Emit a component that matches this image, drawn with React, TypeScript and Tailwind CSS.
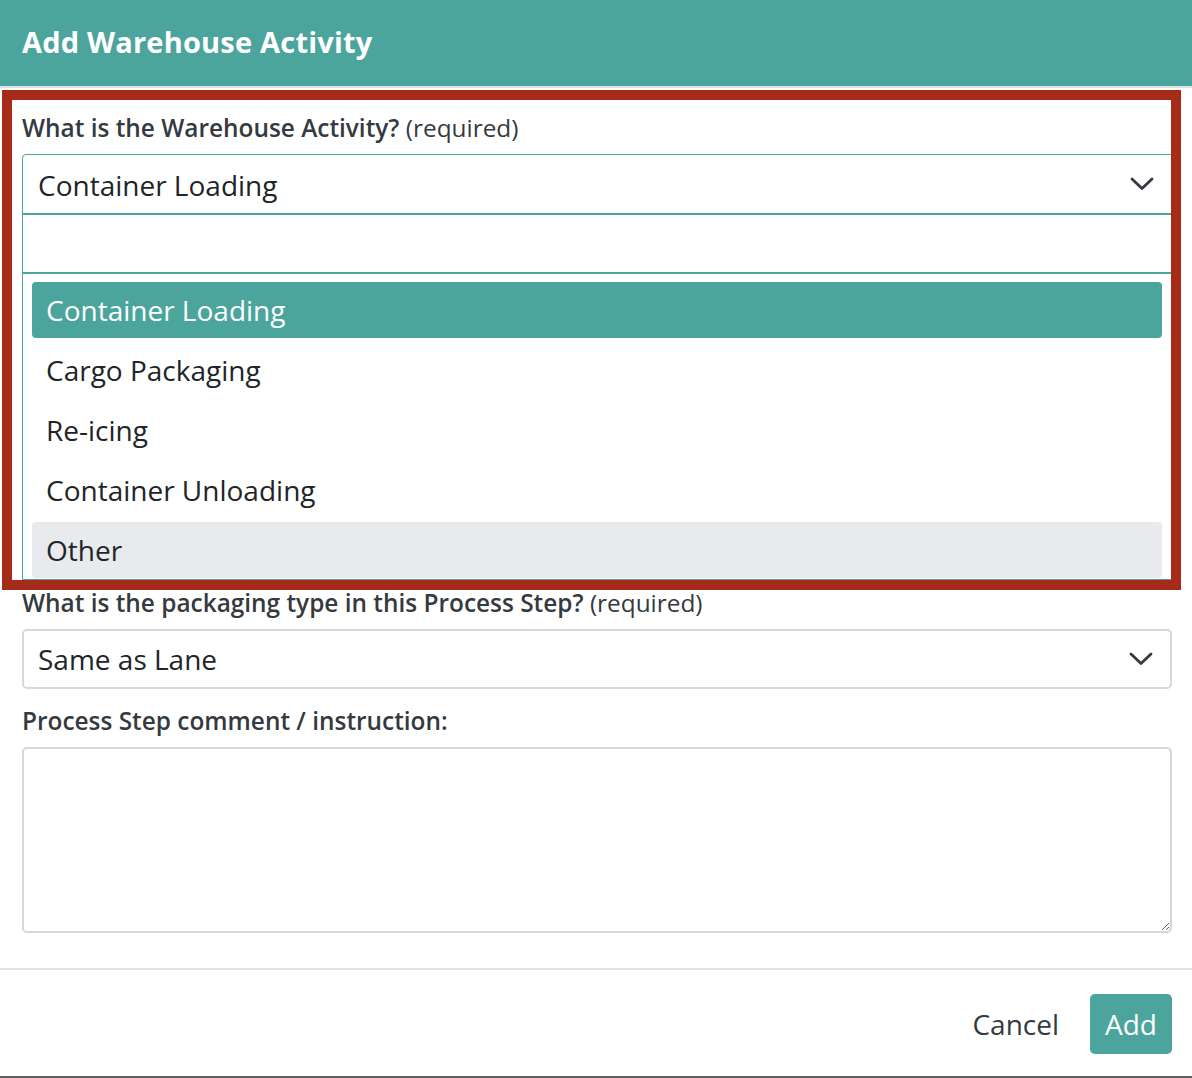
import { useState } from "react";

const ACTIVITIES = ["Container Loading", "Cargo Packaging", "Re-icing", "Container Unloading", "Other"];

// ── Chevron used by both selects ────────────────────────────────────────────
function Chevron() {
  return (
    <svg width="26" height="16" viewBox="0 0 26 16" fill="none">
      <polyline points="3,3 13,12.5 23,3" stroke="#343a40" strokeWidth="2.8" strokeLinecap="round" strokeLinejoin="round" />
    </svg>
  );
}

function Label({ text, required }: { text: string; required?: boolean }) {
  return (
    <div className="text-[24.4px] leading-[28px] text-[#343a40]">
      <span className="font-semibold">{text}</span>
      {required && <span className="font-normal"> (required)</span>}
    </div>
  );
}

export default function App() {
  const [selected] = useState("Container Loading");
  const [hovered, setHovered] = useState("Other");

  return (
    <div
      className="relative w-[1192px] h-[1078px] overflow-hidden bg-white"
      style={{ fontFamily: '"Open Sans", "Noto Sans", sans-serif' }}
    >
      {/* ── Header ───────────────────────────────────────────────────────── */}
      <div className="h-[88px] bg-[#4ba59c] border-b-2 border-[#dfe3e6] pl-[22px] flex items-center">
        <h1 className="text-[29px] font-bold text-white tracking-[0.2px] -mt-[3px]">
          Add Warehouse Activity
        </h1>
      </div>

      {/* ── Body ─────────────────────────────────────────────────────────── */}
      <div className="pl-[22px] pr-[20px] pt-[26px] h-[882px] border-b-2 border-[#dee2e6]">
        <Label text="What is the Warehouse Activity?" required />

        {/* Activity select, opened */}
        <div className="mt-[12px] h-[426px] border border-[#4ba59c] rounded-tl-[4px] overflow-hidden">
          <div className="h-[60px] flex items-center justify-between pl-[15px] pr-[16px] border-b-2 border-[#4ba59c]">
            <span className="text-[28px] text-[#212529] mt-[2px]">{selected}</span>
            <Chevron />
          </div>
          <div className="h-[59px] border-b-2 border-[#4ba59c]" />
          <ul className="px-[9px] pt-[8px] flex flex-col gap-[4px]">
            {ACTIVITIES.map((a) => {
              const active = a === selected;
              const hover = !active && a === hovered;
              return (
                <li
                  key={a}
                  onMouseEnter={() => setHovered(a)}
                  className={
                    "h-[56px] flex items-center pl-[14px] rounded-[4px] text-[28px] " +
                    (active ? "bg-[#4ba59c] text-white" : hover ? "bg-[#e9eaee] text-[#212529]" : "text-[#212529]")
                  }
                >
                  {a}
                </li>
              );
            })}
          </ul>
        </div>

        <div className="mt-[9px]">
          <Label text="What is the packaging type in this Process Step?" required />
        </div>
        <div className="mt-[12px] h-[60px] border-2 border-[#d6d9dc] rounded-[5px] flex items-center justify-between pl-[14px] pr-[16px]">
          <span className="text-[28px] text-[#212529]">Same as Lane</span>
          <Chevron />
        </div>

        <div className="mt-[18px]">
          <Label text="Process Step comment / instruction:" />
        </div>
        <textarea className="mt-[12px] block w-full h-[186px] border-2 border-[#d6d9dc] rounded-[5px] outline-none" />
      </div>

      {/* ── Footer ───────────────────────────────────────────────────────── */}
      <div className="h-[108px] pr-[20px] flex items-start justify-end gap-[31px] pt-[24px] border-b-2 border-[#5f5f5f]">
        <button className="h-[60px] text-[28px] text-[#343a40]">Cancel</button>
        <button className="h-[60px] px-[15px] rounded-[5px] bg-[#4ba59c] text-[28px] text-white">Add</button>
      </div>

      {/* Highlight frame around the activity field */}
      <div className="absolute left-[2px] top-[90px] w-[1179px] h-[500px] border-[10px] border-[#a62b19] pointer-events-none" />
    </div>
  );
}
